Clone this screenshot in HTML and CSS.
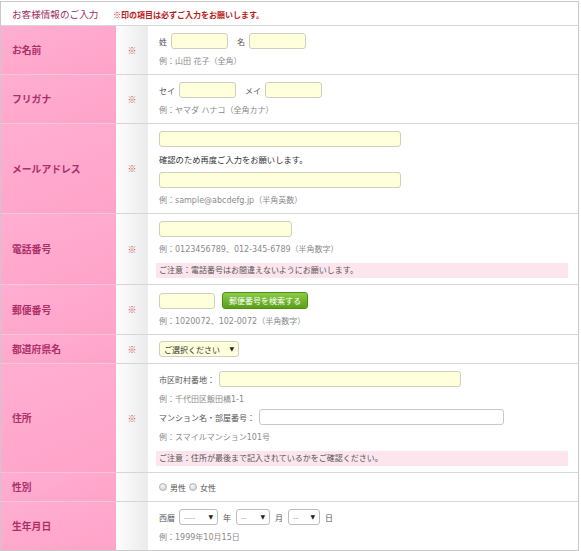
FILE: index.html
```html
<!DOCTYPE html>
<html lang="ja">
<head>
    <meta charset="UTF-8">
    <meta name="viewport" content="width=device-width, initial-scale=1.0">
    <title>お客様情報のご入力</title>
    <link rel="stylesheet" href="styles.css">
</head>
<body>

<table class="entry-table">
    <colgroup>
        <col class="col-label">
        <col class="col-req">
        <col>
    </colgroup>

    <!-- Heading -->
    <tr class="head">
        <th colspan="3">
            <span class="head-title">お客様情報のご入力</span>
            <span class="head-note">※印の項目は必ずご入力をお願いします。</span>
        </th>
    </tr>

    <!-- Name -->
    <tr>
        <th class="label">お名前</th>
        <td class="req">※</td>
        <td class="field">
            <div class="stack">
                <div class="line">
                    <span class="cap">姓</span><input type="text" class="box w-57">
                    <span class="cap cap-next">名</span><input type="text" class="box w-57">
                </div>
                <p class="ex">例：山田 花子（全角）</p>
            </div>
        </td>
    </tr>

    <tr>
        <th class="label">フリガナ</th>
        <td class="req">※</td>
        <td class="field">
            <div class="stack">
                <div class="line">
                    <span class="cap">セイ</span><input type="text" class="box w-57">
                    <span class="cap cap-next">メイ</span><input type="text" class="box w-57">
                </div>
                <p class="ex">例：ヤマダ ハナコ（全角カナ）</p>
            </div>
        </td>
    </tr>

    <!-- Mail -->
    <tr>
        <th class="label">メールアドレス</th>
        <td class="req">※</td>
        <td class="field">
            <div class="stack">
                <div class="line"><input type="text" class="box w-242"></div>
                <p class="text">確認のため再度ご入力をお願いします。</p>
                <div class="line"><input type="text" class="box w-242"></div>
                <p class="ex">例：sample@abcdefg.jp（半角英数）</p>
            </div>
        </td>
    </tr>

    <tr>
        <th class="label">電話番号</th>
        <td class="req">※</td>
        <td class="field">
            <div class="stack">
                <div class="line"><input type="text" class="box w-133"></div>
                <p class="ex">例：0123456789、012-345-6789（半角数字）</p>
                <p class="caution">ご注意：電話番号はお間違えないようにお願いします。</p>
            </div>
        </td>
    </tr>

    <!-- Zip code -->
    <tr>
        <th class="label">郵便番号</th>
        <td class="req">※</td>
        <td class="field">
            <div class="stack">
                <div class="line line-btn">
                    <input type="text" class="box w-56">
                    <button type="button" class="zip-btn">郵便番号を検索する</button>
                </div>
                <p class="ex">例：1020072、102-0072（半角数字）</p>
            </div>
        </td>
    </tr>

    <tr>
        <th class="label">都道府県名</th>
        <td class="req">※</td>
        <td class="field field-single">
            <div class="stack">
                <div class="line">
                    <span class="pick pick-pref">
                        <select><option>ご選択ください</option></select>
                    </span>
                </div>
            </div>
        </td>
    </tr>

    <!-- Address -->
    <tr>
        <th class="label">住所</th>
        <td class="req">※</td>
        <td class="field">
            <div class="stack">
                <div class="line">
                    <span class="cap">市区町村番地：</span><input type="text" class="box w-242">
                </div>
                <p class="ex">例：千代田区飯田橋1-1</p>
                <div class="line line-tight">
                    <span class="cap">マンション名・部屋番号：</span><input type="text" class="box box-plain w-245">
                </div>
                <p class="ex">例：スマイルマンション101号</p>
                <p class="caution caution-loose">ご注意：住所が最後まで記入されているかをご確認ください。</p>
            </div>
        </td>
    </tr>

    <tr>
        <th class="label">性別</th>
        <td class="req"></td>
        <td class="field field-single">
            <div class="stack">
                <div class="line">
                    <label class="radio"><input type="radio" name="sex">男性</label>
                    <label class="radio"><input type="radio" name="sex">女性</label>
                </div>
            </div>
        </td>
    </tr>

    <!-- Birthday -->
    <tr>
        <th class="label">生年月日</th>
        <td class="req"></td>
        <td class="field">
            <div class="stack">
                <div class="line">
                    <span class="cap">西暦</span>
                    <span class="pick pick-plain pick-year"><select><option>----</option></select></span>
                    <span class="cap cap-unit">年</span>
                    <span class="pick pick-plain pick-month"><select><option>--</option></select></span>
                    <span class="cap cap-unit">月</span>
                    <span class="pick pick-plain pick-day"><select><option>--</option></select></span>
                    <span class="cap cap-unit">日</span>
                </div>
                <p class="ex">例：1999年10月15日</p>
            </div>
        </td>
    </tr>
</table>

</body>
</html>
```

FILE: styles.css
```css
/* Basic Reset */
* {
    margin: 0;
    padding: 0;
    box-sizing: border-box;
}
body {
    font-family: "DejaVu Sans", "Noto Sans CJK JP", sans-serif;
    font-size: 8px;
    color: #444;
    background-color: #fff;
    padding-top: 1px;
}

.entry-table {
    width: 579px;
    border-collapse: separate;
    border-spacing: 0;
    table-layout: fixed;
    border: 1px solid #c9c9c9;
}
.col-label {
    width: 115px;
}
.col-req {
    width: 32px;
}

/* Heading row */
.head th {
    height: 24px;
    text-align: left;
    padding-left: 11px;
    font-weight: normal;
    border-bottom: 1px solid #d6d6d6;
    white-space: nowrap;
}
.head-title {
    font-family: "Noto Sans CJK JP", sans-serif;
    font-size: 9.6px;
    color: #9c2f64;
}
.head-note {
    font-family: "Noto Sans CJK JP", sans-serif;
    font-size: 8px;
    font-weight: bold;
    color: #b81c1c;
    margin-left: 12px;
}

/* Cells */
.label {
    background: linear-gradient(160deg, #ffaed1, #ffa3c9);
    color: #ad2f68;
    font-family: "Noto Sans CJK JP", sans-serif;
    font-size: 9.8px;
    font-weight: bold;
    text-align: left;
    padding-left: 11px;
    vertical-align: middle;
    border-bottom: 1px solid #f3c6da;
}
.req {
    background: linear-gradient(to right, #fdfdfd, #ebebeb);
    color: #cc5a5a;
    font-family: "Noto Sans CJK JP", sans-serif;
    font-size: 9px;
    text-align: center;
    vertical-align: middle;
    border-bottom: 1px solid #d6d6d6;
}
.field {
    padding: 7px 10px 7px 11px;
    border-bottom: 1px solid #d6d6d6;
    vertical-align: top;
}
.field-single {
    padding-top: 6px;
    padding-bottom: 6px;
}
tr:last-child th,
tr:last-child td {
    border-bottom: none;
}

.stack {
    display: flex;
    flex-direction: column;
    gap: 8px;
}
.line {
    display: flex;
    align-items: center;
    height: 16px;
    white-space: nowrap;
}
.line-btn {
    height: 17px;
}
.line-tight {
    margin-top: -4px;
}
.cap {
    color: #555;
    margin-right: 4px;
}
.cap-next {
    margin-left: 9px;
}
.cap-unit {
    margin-left: 5px;
    margin-right: 5px;
}
.text {
    line-height: 10px;
    color: #333;
    font-size: 8.3px;
    margin-bottom: -1px;
}
.ex {
    line-height: 10px;
    color: #8a8a8a;
}
.caution {
    background-color: #fde5ee;
    height: 15px;
    line-height: 15px;
    margin: 0 0 -1px -3px;
    padding-left: 3px;
    color: #555;
}
.caution-loose {
    margin-top: 0;
}

/* Inputs */
.box {
    height: 16px;
    border: 1px solid #cfcfc0;
    border-radius: 3px;
    background-color: #ffffdc;
    font-size: 8px;
}
.box-plain {
    background-color: #fff;
    border-color: #c8c8c8;
}
.w-56 { width: 56px; }
.w-57 { width: 57px; }
.w-133 { width: 133px; }
.w-242 { width: 242px; }
.w-245 { width: 245px; }

.zip-btn {
    margin-left: 7px;
    width: 86px;
    height: 17px;
    border: 1px solid #4e9013;
    border-radius: 3px;
    background: linear-gradient(#8ccb47, #5b9f19);
    color: #fff;
    font-family: "Noto Sans CJK JP", sans-serif;
    font-size: 8px;
    cursor: pointer;
}

/* Selects with the little arrow */
.pick {
    position: relative;
    display: inline-block;
    height: 16px;
}
.pick select {
    appearance: none;
    -webkit-appearance: none;
    width: 100%;
    height: 16px;
    border: 1px solid #cfcfc0;
    border-radius: 3px;
    background-color: #ffffdc;
    font-family: "Noto Sans CJK JP", sans-serif;
    font-size: 8px;
    color: #333;
    padding-left: 4px;
}
.pick::after {
    content: "▼";
    position: absolute;
    right: 5px;
    top: 4px;
    font-size: 6px;
    line-height: 8px;
    color: #222;
    pointer-events: none;
}
.pick-pref { width: 80px; }
.pick-plain select {
    background-color: #fff;
    border-color: #bdbdbd;
    color: #999;
}
.pick-year { width: 39px; }
.pick-month { width: 34px; }
.pick-day { width: 32px; }

/* Radios */
.radio {
    display: inline-flex;
    align-items: center;
    color: #555;
    margin-right: 3px;
}
.radio input {
    appearance: none;
    -webkit-appearance: none;
    width: 8px;
    height: 8px;
    border-radius: 50%;
    border: 1px solid #b4b4b4;
    background: radial-gradient(circle at 40% 35%, #f6f6f6, #cdcdcd);
    margin-right: 3px;
}
```
